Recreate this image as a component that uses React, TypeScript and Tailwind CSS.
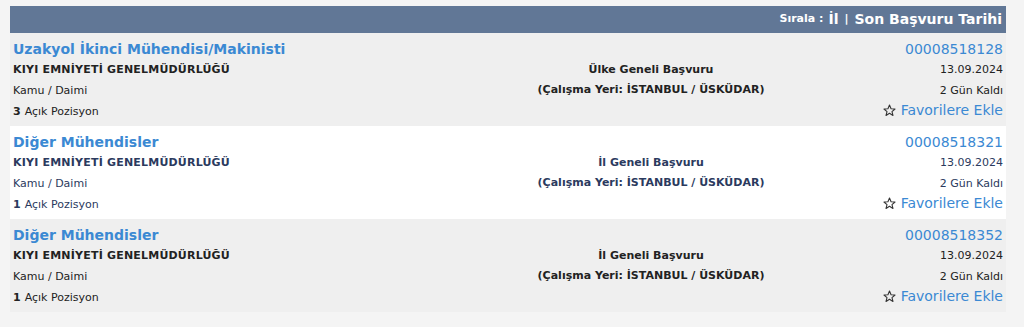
import React from "react";

type Listing = {
  title: string;
  org: string;
  type: string;
  count: number;
  scope: string;
  place: string;
  code: string;
  date: string;
  left: string;
  highlight?: boolean;
};

const listings: Listing[] = [
  {
    title: "Uzakyol İkinci Mühendisi/Makinisti",
    org: "KIYI EMNİYETİ GENELMÜDÜRLÜĞÜ",
    type: "Kamu / Daimi",
    count: 3,
    scope: "Ülke Geneli Başvuru",
    place: "(Çalışma Yeri: İSTANBUL / ÜSKÜDAR)",
    code: "00008518128",
    date: "13.09.2024",
    left: "2 Gün Kaldı",
  },
  {
    title: "Diğer Mühendisler",
    org: "KIYI EMNİYETİ GENELMÜDÜRLÜĞÜ",
    type: "Kamu / Daimi",
    count: 1,
    scope: "İl Geneli Başvuru",
    place: "(Çalışma Yeri: İSTANBUL / ÜSKÜDAR)",
    code: "00008518321",
    date: "13.09.2024",
    left: "2 Gün Kaldı",
    highlight: true,
  },
  {
    title: "Diğer Mühendisler",
    org: "KIYI EMNİYETİ GENELMÜDÜRLÜĞÜ",
    type: "Kamu / Daimi",
    count: 1,
    scope: "İl Geneli Başvuru",
    place: "(Çalışma Yeri: İSTANBUL / ÜSKÜDAR)",
    code: "00008518352",
    date: "13.09.2024",
    left: "2 Gün Kaldı",
  },
];

function StarIcon() {
  return (
    <svg width="13" height="13" viewBox="0 0 24 24" className="text-[#333]">
      <polygon
        points="12,2 14.9,8.8 22.2,9.3 16.6,14 18.4,21.2 12,17.2 5.6,21.2 7.4,14 1.8,9.3 9.1,8.8"
        fill="none"
        stroke="currentColor"
        strokeWidth="2"
        strokeLinejoin="round"
      />
    </svg>
  );
}

function ListingRow({ item }: { item: Listing }) {
  const text = item.highlight ? "text-[#2b3a5e]" : "text-[#222]";
  return (
    <div
      className={`flex px-[3px] pt-[5px] pb-[3px] ${
        item.highlight ? "bg-white" : "bg-[#efefef]"
      }`}
    >
      {/* left column */}
      <div className={`w-[488px] ${text}`}>
        <div className="flex h-[22px] items-center text-[14px] font-bold text-[#3b89d3]">
          {item.title}
        </div>
        <div className="flex h-[21px] items-center text-[11px] font-bold tracking-[0.2px]">
          {item.org}
        </div>
        <div className="flex h-[21px] items-center text-[11px]">{item.type}</div>
        <div className="flex h-[21px] items-center text-[11px]">
          <span className="mr-1 font-bold">{item.count}</span>Açık Pozisyon
        </div>
      </div>

      {/* middle column */}
      <div className={`w-[300px] pt-[22px] text-center text-[11px] font-bold ${text}`}>
        <div className="flex h-[20px] items-center justify-center">{item.scope}</div>
        <div className="flex h-[21px] items-center justify-center">{item.place}</div>
      </div>

      {/* right column */}
      <div className={`flex flex-1 flex-col items-end ${text}`}>
        <div className="flex h-[22px] items-center text-[14px] text-[#3b89d3]">
          {item.code}
        </div>
        <div className="flex h-[21px] items-center text-[11px]">{item.date}</div>
        <div className="flex h-[21px] items-center text-[11px]">{item.left}</div>
        <div className="flex h-[16px] items-center gap-[5px] text-[14px] text-[#3b89d3]">
          <StarIcon />
          Favorilere Ekle
        </div>
      </div>
    </div>
  );
}

export default function App() {
  return (
    <div
      className="h-[327px] w-[1024px] overflow-hidden bg-[#f4f4f4] pt-[6px]"
      style={{ fontFamily: '"DejaVu Sans", Verdana, sans-serif' }}
    >
      <div className="ml-[10px] w-[996px]">
        {/* sort bar */}
        <div className="flex h-[27px] items-center justify-end bg-[#617796] pr-[4px] font-bold text-white">
          <span className="text-[11px]">Sırala :</span>
          <span className="ml-[5px] text-[14px]">İl</span>
          <span className="mx-[6px] text-[11px]">|</span>
          <span className="text-[14px]">Son Başvuru Tarihi</span>
        </div>

        {listings.map((item) => (
          <ListingRow key={item.code} item={item} />
        ))}
      </div>
    </div>
  );
}
